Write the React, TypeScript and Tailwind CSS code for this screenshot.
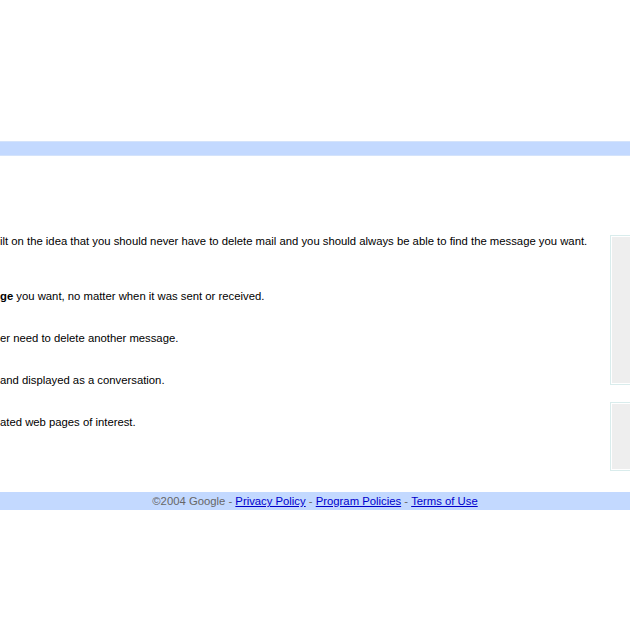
export default function App() {
  const bullets = [
    <>
      <b>ge</b> you want, no matter when it was sent or received.
    </>,
    <>er need to delete another message.</>,
    <>and displayed as a conversation.</>,
    <>ated web pages of interest.</>,
  ];

  return (
    <div
      className="h-[630px] w-[630px] overflow-hidden bg-white text-[11.3px] leading-4 text-black"
      style={{ fontFamily: '"Liberation Sans", Arial, sans-serif' }}
    >
      <div className="h-[141px]" />
      <div className="h-[15px] border-y border-[#d4e3fb] bg-[#c3d9ff]" />

      <main className="flex h-[336px]">
        <div className="flex-1 pt-[77px] whitespace-nowrap">
          <p>
            ilt on the idea that you should never have to delete mail and you should always be able to find the
            message you want.
          </p>
          <ul className="mt-[39px] flex flex-col gap-[26px]">
            {bullets.map((b, i) => (
              <li key={i}>{b}</li>
            ))}
          </ul>
        </div>
        <div className="flex w-[20px] shrink-0 flex-col gap-[17px] pt-[79px]">
          <div className="h-[150px] border border-r-0 border-[#d9ecec] bg-white p-px pr-0">
            <div className="h-full bg-[#eeeeee]" />
          </div>
          <div className="h-[69px] border border-r-0 border-[#d9ecec] bg-white p-px pr-0">
            <div className="h-full bg-[#eeeeee]" />
          </div>
        </div>
      </main>

      <footer className="flex h-[18px] items-center justify-center whitespace-pre bg-[#c3d9ff] text-[#666666]">
        ©2004 Google - <a className="text-[#0000cc] underline">Privacy Policy</a> -{' '}
        <a className="text-[#0000cc] underline">Program Policies</a> -{' '}
        <a className="text-[#0000cc] underline">Terms of Use</a>
      </footer>
    </div>
  );
}
